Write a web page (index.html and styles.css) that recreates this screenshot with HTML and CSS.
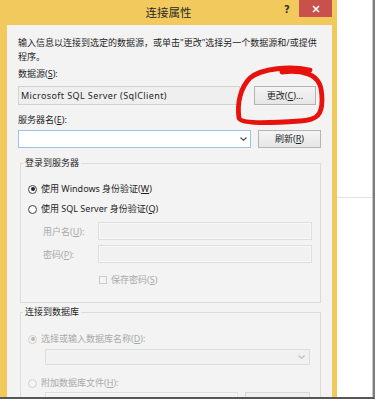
FILE: index.html
```html
<!DOCTYPE html>
<html lang="zh-CN">
<head>
<meta charset="utf-8">
<title>连接属性</title>
<link rel="stylesheet" href="styles.css">
</head>
<body>
<div class="frame">
  <div class="dialog">
    <div class="titlebar">
      <span class="title">连接属性</span>
      <span class="help">?</span>
      <span class="close"><svg width="8" height="8" viewBox="0 0 8 8"><path d="M1 1 L7 7 M7 1 L1 7" stroke="#fff" stroke-width="1.6" fill="none"/></svg></span>
    </div>
    <div class="content">
      <p class="intro">输入信息以连接到选定的数据源，或单击"更改"选择另一个数据源和/或提供<br>程序。</p>
      <div class="label">数据源(<u>S</u>):</div>
      <div class="row row-source">
        <div class="textbox readonly">Microsoft SQL Server (SqlClient)</div>
        <div class="btn btn-change">更改(<u>C</u>)...</div>
      </div>
      <div class="label label-server">服务器名(<u>E</u>):</div>
      <div class="row row-server">
        <div class="combo"><svg class="chev" width="7" height="4" viewBox="0 0 7 4"><path d="M0.5 0.5 L3.5 3.3 L6.5 0.5" stroke="#444" stroke-width="1.1" fill="none"/></svg></div>
        <div class="btn btn-refresh">刷新(<u>R</u>)</div>
      </div>
      <fieldset class="group group-login">
        <legend>登录到服务器</legend>
        <div class="opt opt-first"><span class="radio checked"></span>使用 Windows 身份验证(<u>W</u>)</div>
        <div class="opt opt-second"><span class="radio"></span>使用 SQL Server 身份验证(<u>Q</u>)</div>
        <div class="field field-user"><span class="flabel">用户名(<u>U</u>):</span><span class="dbox"></span></div>
        <div class="field field-pass"><span class="flabel">密码(<u>P</u>):</span><span class="dbox"></span></div>
        <div class="check"><span class="cbox"></span>保存密码(<u>S</u>)</div>
      </fieldset>
      <fieldset class="group group-db">
        <legend>连接到数据库</legend>
        <div class="opt dis opt-db"><span class="radio checked dis"></span>选择或输入数据库名称(<u>D</u>):</div>
        <div class="dcombo"><svg class="chev" width="7" height="4" viewBox="0 0 7 4"><path d="M0.5 0.5 L3.5 3.3 L6.5 0.5" stroke="#b8b8b8" stroke-width="1.1" fill="none"/></svg></div>
        <div class="opt dis opt-file"><span class="radio dis"></span>附加数据库文件(<u>H</u>):</div>
        <div class="filerow"><span class="dbox file"></span><span class="dbtn"></span></div>
      </fieldset>
    </div>
  </div>
  <div class="behind"><div class="behind-line"></div></div>
</div>
<svg class="scribble" width="100" height="70" viewBox="0 0 100 70">
  <path d="M80 12 C60 8, 32 10, 20 20 C10 30, 7 46, 9 60 C11 66, 40 65, 70 63 C88 62, 92 56, 92 42 C92 30, 90 20, 78 16 C70 13, 60 13, 52 14" stroke="#e8120c" stroke-width="4.8" fill="none" stroke-linecap="round" stroke-linejoin="round"/>
</svg>
</body>
</html>
```
FILE: styles.css
```css
html, body {
  margin: 0;
  padding: 0;
}
body {
  width: 379px;
  height: 402px;
  background: #ffffff;
  overflow: hidden;
  position: relative;
  font-family: "Noto Sans", "Noto Sans CJK SC", sans-serif;
  font-size: 9px;
  color: #1e1e1e;
}
u { text-decoration: underline; text-underline-offset: 1px; }

.frame {
  display: flex;
  width: 373px;
  height: 397px;
  border-right: 2px solid #7c7c7c;
  border-bottom: 2px solid #565656;
}
.dialog {
  width: 337px;
  display: flex;
  flex-direction: column;
  background: #f1c95c;
  overflow: hidden;
}
.titlebar {
  height: 25px;
  flex: none;
  display: grid;
  grid-template-columns: 1fr 14px 5px 33px 5px;
  grid-template-rows: 25px;
  align-items: start;
}
.title {
  grid-column: 1 / -1;
  grid-row: 1;
  text-align: center;
  line-height: 25px;
  font-family: "Noto Sans CJK SC", sans-serif;
  font-size: 11.5px;
  color: #2a2a2a;
}
.help {
  grid-column: 2;
  grid-row: 1;
  line-height: 20px;
  text-align: center;
  font-family: "DejaVu Sans", sans-serif;
  font-weight: bold;
  font-size: 10px;
  color: #3a3320;
}
.close {
  grid-column: 4;
  grid-row: 1;
  height: 17px;
  background: #c9514b;
  display: flex;
  align-items: center;
  justify-content: center;
}
.content {
  flex: 1;
  min-height: 0;
  margin: 0 5px 0 7px;
  background: #f3f3f3;
  padding: 11px 11px 0;
  overflow: hidden;
}
.intro {
  margin: 0;
  line-height: 13.5px;
  white-space: nowrap;
}
.label {
  margin-top: 5px;
  line-height: 12px;
}
.label-server { margin-top: 9px; }
.row {
  display: flex;
  margin-top: 6px;
}
.row-server { margin-top: 4px; }
.textbox {
  box-sizing: border-box;
  height: 19px;
  width: 222px;
  border: 1px solid #d2d2d2;
  background: #efefef;
  line-height: 17px;
  padding-left: 2px;
  white-space: nowrap;
  letter-spacing: 0.4px;
}
.btn {
  box-sizing: border-box;
  border: 1px solid #b4b4b4;
  background: linear-gradient(#f4f4f4, #e6e6e6);
  text-align: center;
  color: #222;
}
.btn-change {
  margin-left: 14px;
  width: 62px;
  height: 19px;
  line-height: 17px;
}
.combo {
  box-sizing: border-box;
  width: 233px;
  height: 18px;
  border: 1px solid #9ec2e6;
  background: #fff;
  display: flex;
  align-items: center;
  justify-content: flex-end;
  padding-right: 3px;
}
.btn-refresh {
  margin-left: 7px;
  width: 63px;
  height: 18px;
  line-height: 16px;
}

.group {
  margin: 9px 0 0 2px;
  width: 301px;
  box-sizing: border-box;
  padding: 0 0 15px;
  border: 1px solid #dcdcdc;
  min-width: 0;
}
.group legend {
  margin-left: 2px;
  padding: 0 2px;
  line-height: 12px;
  color: #1e1e1e;
}
.opt {
  display: flex;
  align-items: center;
  line-height: 14px;
  padding-left: 7px;
  white-space: nowrap;
}
.opt-first { margin-top: 13px; }
.opt-second { margin-top: 6px; }
.radio {
  box-sizing: border-box;
  width: 9px;
  height: 9px;
  border: 1px solid #444;
  border-radius: 50%;
  background: #fff;
  margin-right: 4px;
  position: relative;
  flex: none;
}
.radio.checked::after {
  content: "";
  position: absolute;
  left: 1.5px;
  top: 1.5px;
  width: 4px;
  height: 4px;
  border-radius: 50%;
  background: #222;
}
.radio.dis {
  border-color: #cfcfcf;
  background: #f4f4f4;
}
.radio.dis.checked::after { background: #b9b9b9; }
.field {
  display: flex;
  align-items: center;
  padding-left: 22px;
  color: #a9a9a9;
}
.field-user { margin-top: 6px; }
.field-pass { margin-top: 5px; }
.flabel {
  width: 55px;
  flex: none;
}
.dbox {
  box-sizing: border-box;
  display: block;
  width: 214px;
  height: 18px;
  border: 1px solid #dedede;
  background: #f1f1f1;
  box-shadow: inset 0 0 0 1px #f8f8f8;
}
.check {
  display: flex;
  align-items: center;
  margin-top: 10px;
  padding-left: 78px;
  line-height: 14px;
  color: #a9a9a9;
}
.cbox {
  box-sizing: border-box;
  width: 8px;
  height: 8px;
  border: 1px solid #cccccc;
  background: #f4f4f4;
  margin-right: 4px;
}

.group-db {
  margin-top: 3px;
  padding-bottom: 0;
  border-bottom: none;
  height: 120px;
}
.dis { color: #a9a9a9; }
.opt-db { margin-top: 14px; }
.dcombo {
  box-sizing: border-box;
  margin: 3px 0 0 24px;
  width: 265px;
  height: 16px;
  border: 1px solid #dedede;
  background: #f1f1f1;
  display: flex;
  align-items: center;
  justify-content: flex-end;
  padding-right: 4px;
}
.opt-file { margin-top: 11px; }
.filerow {
  display: flex;
  margin: 2px 0 0 24px;
}
.dbox.file { width: 193px; }
.dbtn {
  box-sizing: border-box;
  margin-left: 7px;
  width: 65px;
  height: 18px;
  border: 1px solid #d8d8d8;
  background: #efefef;
}

.behind {
  flex: 1;
  background: #ffffff;
  border-right: 1px solid #c9c9c9;
}
.behind-line {
  margin-top: 197px;
  height: 1px;
  background: #e2e2e2;
}

.scribble {
  position: absolute;
  left: 230px;
  top: 58px;
  pointer-events: none;
}
```
